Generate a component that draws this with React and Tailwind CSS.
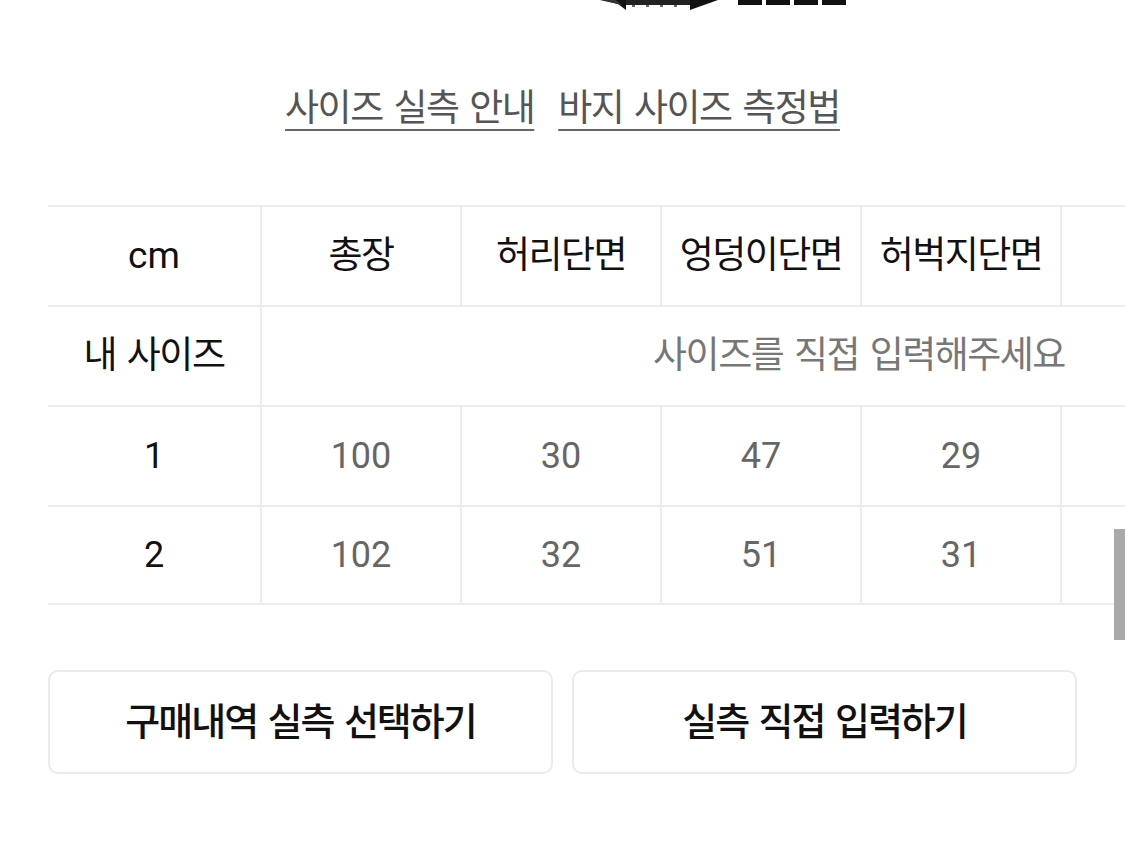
import React from "react";

const F = { fontFamily: '"Roboto", "Noto Sans CJK KR", "Liberation Sans", sans-serif' };

function Cell({ children, first, className = "" }) {
  return (
    <div
      className={
        "shrink-0 h-full flex items-center justify-center " +
        (first ? "w-[212px] " : "w-[200px] border-l-2 border-[#ececec] ") +
        className
      }
    >
      {children}
    </div>
  );
}

const ko = "text-[37px] tracking-[-1.5px] [word-spacing:3px]";
const num = "text-[36px] text-[#666]";

export default function App() {
  const rows = [
    ["1", "100", "30", "47", "29", "", ""],
    ["2", "102", "32", "51", "31", "", ""],
  ];
  return (
    <div className="relative w-[1125px] h-[863px] bg-white overflow-hidden text-[#111]" style={F}>
      {/* cut-off illustration at the top */}
      <div className="relative h-[12px] overflow-hidden">
        <svg className="absolute left-[596px] top-0" width="260" height="12" viewBox="0 0 260 12">
          <polygon points="4,0 30,0 30,10 22,4" fill="#111" />
          <polygon points="6,0 20,0 26,5" fill="#333" />
          <rect x="30" y="0" width="64" height="5" fill="#222" />
          <rect x="36" y="5" width="3" height="2" fill="#666" />
          <rect x="50" y="5" width="3" height="2" fill="#666" />
          <rect x="64" y="5" width="3" height="2" fill="#666" />
          <rect x="78" y="5" width="3" height="2" fill="#666" />
          <polygon points="94,0 122,0 94,10" fill="#111" />
          <rect x="142" y="0" width="24" height="5" fill="#111" />
          <rect x="170" y="0" width="24" height="5" fill="#111" />
          <rect x="198" y="0" width="24" height="5" fill="#111" />
          <rect x="226" y="0" width="24" height="5" fill="#111" />
        </svg>
      </div>

      {/* links */}
      <div className="mt-[77px] h-[40px] flex justify-center items-center gap-[24px] text-[#555]">
        <span className={ko + " underline decoration-2 underline-offset-[8px] decoration-[#666] leading-[40px]"}>
          사이즈 실측 안내
        </span>
        <span className={ko + " underline decoration-2 underline-offset-[8px] decoration-[#666] leading-[40px]"}>
          바지 사이즈 측정법
        </span>
      </div>

      {/* size table */}
      <div className="mt-[76px] pl-[48px] overflow-hidden">
        <div className="w-max">
          <div className="flex h-[100px] border-t-2 border-[#ececec]">
            <Cell first className="text-[37px]">cm</Cell>
            <Cell className={ko}>총장</Cell>
            <Cell className={ko}>허리단면</Cell>
            <Cell className={ko}>엉덩이단면</Cell>
            <Cell className={ko}>허벅지단면</Cell>
            <Cell className={ko}></Cell>
            <Cell className={ko}></Cell>
          </div>
          <div className="flex h-[100px] border-t-2 border-[#ececec]">
            <Cell first className={ko}>내 사이즈</Cell>
            <div className={"shrink-0 w-[1196px] h-full border-l-2 border-[#ececec] flex items-center justify-center text-[#777] " + ko}>
              사이즈를 직접 입력해주세요
            </div>
          </div>
          {rows.map((r, i) => (
            <div
              key={i}
              className={"flex h-[100px] border-t-2 border-[#ececec] " + (i === rows.length - 1 ? "border-b-2" : "")}
            >
              {r.map((v, j) => (
                <Cell key={j} first={j === 0} className={j === 0 ? "text-[36px] text-[#111]" : num}>
                  {v}
                </Cell>
              ))}
            </div>
          ))}
        </div>
      </div>

      {/* buttons */}
      <div className="mt-[65px] px-[48px] grid grid-cols-2 gap-[19px]">
        <button className="h-[104px] border-2 border-[#ebebeb] rounded-[10px] bg-white flex items-center justify-center text-[38px] font-medium tracking-[-2px] [word-spacing:3px] text-[#111]">
          구매내역 실측 선택하기
        </button>
        <button className="h-[104px] border-2 border-[#ebebeb] rounded-[10px] bg-white flex items-center justify-center text-[38px] font-medium tracking-[-2px] [word-spacing:3px] text-[#111]">
          실측 직접 입력하기
        </button>
      </div>

      {/* scrollbar thumb */}
      <div className="absolute left-[1114px] top-[529px] w-[11px] h-[111px] bg-[#a9a9a9]" />
    </div>
  );
}
